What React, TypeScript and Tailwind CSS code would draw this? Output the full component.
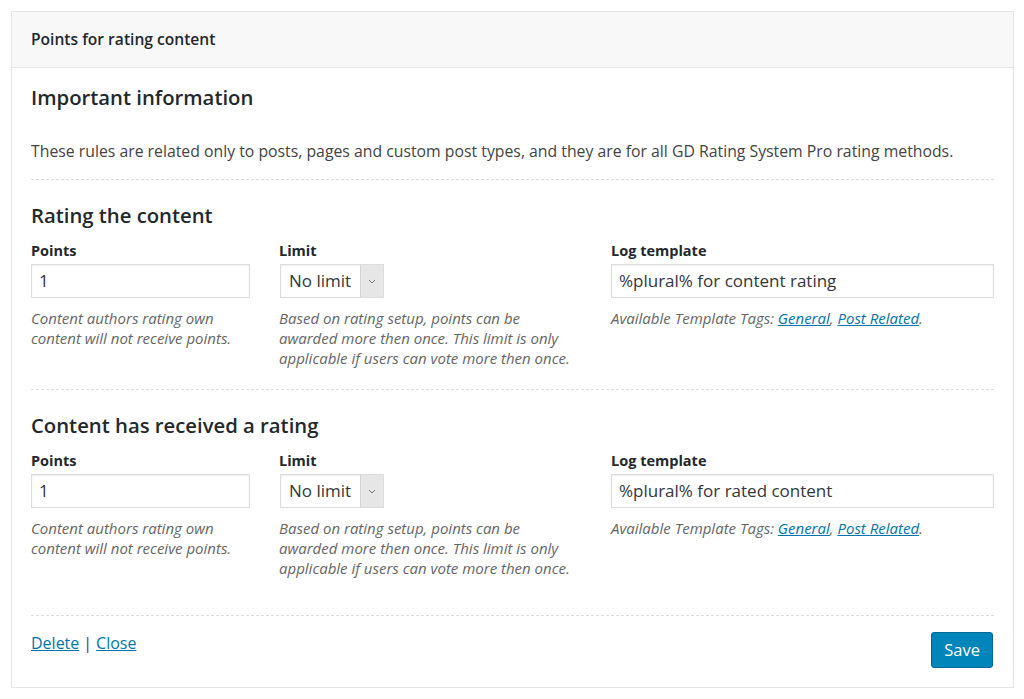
import React from 'react';

const font = { fontFamily: '"Open Sans", "Noto Sans", sans-serif' };

function LimitSelect() {
  return (
    <div className="ml-[1px] mt-[3px] flex h-[34px] w-[104px] border border-[#dddddd] bg-white shadow-[inset_0_1px_2px_rgba(0,0,0,0.07)]">
      <div className="flex flex-1 items-center pl-[8px] text-[17px] text-[#32373c]">No limit</div>
      <div className="flex w-[23px] items-center justify-center border-l border-[#d4d4d4] bg-[#e6e6e6]">
        <svg width="8" height="5" viewBox="0 0 8 5" fill="none">
          <path d="M1 1l3 3 3-3" stroke="#777" strokeWidth="1" />
        </svg>
      </div>
    </div>
  );
}

function TextInput({ value, width }: { value: string; width: string }) {
  return (
    <div
      className={`mt-[3px] flex h-[34px] ${width} items-center border border-[#dddddd] bg-white pl-[7px] text-[17px] text-[#32373c] shadow-[inset_0_1px_2px_rgba(0,0,0,0.07)]`}
    >
      {value}
    </div>
  );
}

function Help({ children }: { children: React.ReactNode }) {
  return <p className="mt-[10px] whitespace-nowrap text-[15px] italic leading-[20px] text-[#666666]">{children}</p>;
}

function Label({ children }: { children: React.ReactNode }) {
  return <div className="text-[14.5px] font-bold leading-[20px] text-[#23282d]">{children}</div>;
}

function RuleSection({ title, template }: { title: string; template: string }) {
  return (
    <div className="pt-[20px]">
      <h3 className="text-[20.3px] font-semibold leading-[30px] text-[#23282d]">{title}</h3>
      <div className="mt-[11px] flex">
        <div className="w-[248px] shrink-0">
          <Label>Points</Label>
          <TextInput value="1" width="w-[219px]" />
          <Help>
            Content authors rating own
            <br />
            content will not receive points.
          </Help>
        </div>
        <div className="w-[332px] shrink-0">
          <Label>Limit</Label>
          <LimitSelect />
          <Help>
            Based on rating setup, points can be
            <br />
            awarded more then once. This limit is only
            <br />
            applicable if users can vote more then once.
          </Help>
        </div>
        <div className="flex-1">
          <Label>Log template</Label>
          <TextInput value={template} width="w-full" />
          <Help>
            Available Template Tags:{' '}
            <a href="#" className="text-[#0073aa] underline">General</a>,{' '}
            <a href="#" className="text-[#0073aa] underline">Post Related</a>.
          </Help>
        </div>
      </div>
    </div>
  );
}

export default function App() {
  return (
    <div className="min-h-screen bg-white p-[11px]" style={font}>
      <div className="w-[1003px] border border-[#e5e5e5] bg-white">
        <div className="flex h-[56px] items-center border-b border-[#e5e5e5] bg-[#f8f8f8] px-[19px]">
          <h2 className="text-[15.6px] font-semibold text-[#23282d]">Points for rating content</h2>
        </div>
        <div className="px-[19px] pb-[19px] pt-[14px]">
          <h2 className="text-[20.3px] font-semibold leading-[30px] text-[#23282d]">Important information</h2>
          <p className="mt-[27px] text-[15.8px] leading-[24px] text-[#444444]">
            These rules are related only to posts, pages and custom post types, and they are for all GD Rating System Pro rating methods.
          </p>
          <div className="mt-[16px] border-t border-dashed border-[#dddddd]" />
          <RuleSection title="Rating the content" template="%plural% for content rating" />
          <div className="mt-[21px] border-t border-dashed border-[#dddddd]" />
          <RuleSection title="Content has received a rating" template="%plural% for rated content" />
          <div className="mt-[37px] border-t border-dashed border-[#dddddd]" />
          <div className="mt-[15px] flex items-start justify-between">
            <div className="text-[16px] leading-[24px] text-[#444444]">
              <a href="#" className="text-[#0073aa] underline">Delete</a>
              <span className="mx-[4px]">|</span>
              <a href="#" className="text-[#0073aa] underline">Close</a>
            </div>
            <button className="mr-[1px] mt-[1px] h-[36px] rounded-[3px] border border-[#006799] bg-[#0085ba] px-[12px] text-[16.5px] text-white">
              Save
            </button>
          </div>
        </div>
      </div>
    </div>
  );
}
